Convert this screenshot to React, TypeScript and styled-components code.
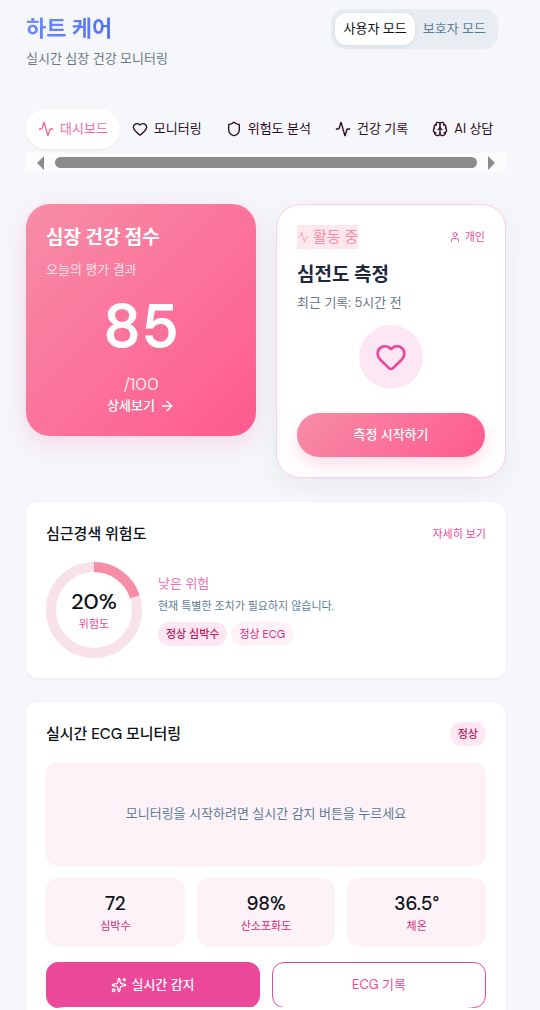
import React from "react";
import styled, { createGlobalStyle, css } from "styled-components";
import { Activity, ArrowRight, Brain, Heart, Shield, Sparkles, User } from "lucide-react";

const brand = "linear-gradient(135deg, #f78da7 0%, #ff5a8f 100%)";
const pink = "#ec4899";

const GlobalStyle = createGlobalStyle`
  *, *::before, *::after { box-sizing: border-box; }
  body {
    margin: 0;
    background: #f5f7fb;
    color: #0c1116;
    font-family: "DM Sans", Lato, "Noto Sans CJK KR", sans-serif;
    font-size: 13px;
    line-height: 20px;
  }
  h1, h2, p, dl, dd { margin: 0; }
  button { font: inherit; border: 0; cursor: pointer; background: none; padding: 0; }
  a { color: inherit; text-decoration: none; }
  svg { flex: none; }
`;

const Page = styled.div`
  height: 100vh;
  overflow-y: auto;
  scrollbar-width: none;
`;

const Content = styled.div`
  padding: 8px 34px 80px 26px;
`;

const Header = styled.header`
  display: flex;
  justify-content: space-between;
  align-items: flex-start;
  padding: 1px 8px 0 0;
`;

const Brand = styled.h1`
  width: fit-content;
  font-size: 22px;
  line-height: 40px;
  font-weight: 700;
  color: transparent;
  background: linear-gradient(135deg, #748ffc, #4c6ef5);
  background-clip: text;
`;

const Tagline = styled.p`
  color: #6b7785;
`;

const ModeSwitch = styled.div`
  display: flex;
  padding: 4px;
  border-radius: 14px;
  background: #e8edf4;
`;

const Mode = styled.button<{ $on?: boolean }>`
  height: 32px;
  padding: 0 8px;
  border-radius: 12px;
  color: #5c7c96;
  ${(p) => p.$on && css`
    background: #fff;
    color: #0c1116;
    box-shadow: 0 1px 4px rgba(0, 0, 0, 0.08);
  `}
`;

const Tabs = styled.nav`
  display: flex;
  margin-top: 40px;
  height: 40px;
  white-space: nowrap;
`;

const Tab = styled.button<{ $on?: boolean }>`
  display: flex;
  align-items: center;
  gap: 6px;
  padding: 0 12px;
  border-radius: 20px;
  color: #2d0a1b;
  ${(p) => p.$on && css`
    background: #fff;
    color: #f368a0;
    box-shadow: 0 1px 3px rgba(0, 0, 0, 0.06);
  `}
`;

const Scrollbar = styled.div`
  display: flex;
  align-items: center;
  justify-content: space-between;
  gap: 11px;
  height: 19px;
  margin: 4px 0 32px;
  padding: 0 11px;
  background: #fcfcfc;
`;

const Thumb = styled.div`
  flex: 1;
  height: 11px;
  border-radius: 6px;
  background: #8b8b8b;
`;

const Pair = styled.section`
  display: grid;
  grid-template-columns: 1fr 1fr;
  align-items: start;
  gap: 20px;
`;

const ScoreCard = styled.article`
  display: flex;
  flex-direction: column;
  padding: 20px;
  border-radius: 24px;
  color: #fff;
  background: ${brand};
  box-shadow: 0 8px 24px rgba(255, 90, 143, 0.2);
`;

const CardTitle = styled.h2`
  font-size: 19px;
  line-height: 28px;
  font-weight: 700;
`;

const ScoreNote = styled.p`
  margin-top: 8px;
  color: rgba(255, 255, 255, 0.8);
`;

const Score = styled.strong`
  align-self: center;
  font-size: 61px;
  line-height: 60px;
  font-weight: 600;
  margin-top: 16px;
`;

const ScoreMax = styled.span`
  align-self: center;
  margin: 16px 0 0;
  font-size: 17px;
  line-height: 24px;
  color: rgba(255, 255, 255, 0.85);
`;

const MoreLink = styled.a`
  display: flex;
  align-items: center;
  align-self: center;
  gap: 4px;
  font-weight: 500;
`;

const MeasureCard = styled.article`
  display: flex;
  flex-direction: column;
  padding: 20px;
  border: 1px solid #f9cfe4;
  border-radius: 24px;
  background: #fff;
  box-shadow: 0 8px 24px rgba(30, 41, 59, 0.06);
`;

const Row = styled.div`
  display: flex;
  align-items: center;
  justify-content: space-between;
`;

const Status = styled.span`
  display: flex;
  align-items: center;
  gap: 4px;
  font-size: 15px;
  line-height: 24px;
  color: #f78da7;
  background: #ffe8ed;
`;

const Person = styled.span`
  display: flex;
  align-items: center;
  gap: 4px;
  font-size: 11px;
  color: ${pink};
`;

const MeasureTitle = styled(CardTitle)`
  margin-top: 12px;
  color: #1e293b;
`;

const Recent = styled.p`
  margin-top: 4px;
  color: #6b7785;
`;

const HeartDisc = styled.div`
  display: grid;
  place-items: center;
  align-self: center;
  width: 64px;
  height: 64px;
  margin: 12px 0 24px;
  border-radius: 50%;
  color: ${pink};
  background: #fce7f3;
`;

const StartButton = styled.button`
  height: 44px;
  border-radius: 22px;
  font-weight: 500;
  color: #fff;
  background: ${brand};
  box-shadow: 0 8px 16px rgba(255, 90, 143, 0.2);
`;

const Panel = styled.section`
  margin-top: 24px;
  padding: 20px;
  border-radius: 12px;
  background: #fff;
  box-shadow: 0 1px 3px rgba(0, 0, 0, 0.06);
`;

const PanelTitle = styled.h2`
  font-size: 15px;
  line-height: 24px;
  font-weight: 500;
`;

const DetailLink = styled.a`
  font-size: 11px;
  color: ${pink};
`;

const RiskBody = styled.div`
  display: flex;
  align-items: center;
  gap: 16px;
  margin-top: 16px;
`;

const Gauge = styled.div`
  display: grid;
  place-items: center;
  width: 96px;
  height: 96px;
  > * { grid-area: 1 / 1; }
`;

const GaugeText = styled.div`
  display: grid;
  justify-items: center;
  padding-top: 4px;
  font-size: 11px;
  color: ${pink};
  strong {
    font-size: 22px;
    line-height: 24px;
    font-weight: 500;
    color: #0c1116;
  }
`;

const RiskLevel = styled.p`
  color: #f472b6;
`;

const RiskText = styled.p`
  font-size: 11px;
  line-height: 24px;
  color: #5c7c96;
`;

const Tags = styled.div`
  display: flex;
  gap: 4px;
  margin-top: 4px;
`;

const Tag = styled.span<{ $soft?: boolean }>`
  padding: 0 8px;
  border-radius: 12px;
  font-size: 11px;
  line-height: 24px;
  font-weight: ${(p) => (p.$soft ? 400 : 500)};
  color: ${(p) => (p.$soft ? "#db2777" : "#be185d")};
  background: ${(p) => (p.$soft ? "#fdf2f8" : "#fce7f3")};
`;

const Monitor = styled.div`
  display: grid;
  place-items: center;
  height: 104px;
  margin-top: 16px;
  border-radius: 12px;
  color: #5c7c96;
  background: #fdf2f8;
`;

const Vitals = styled.dl`
  display: grid;
  grid-template-columns: repeat(3, 1fr);
  gap: 12px;
  margin-top: 12px;
`;

const Vital = styled.div`
  display: flex;
  flex-direction: column-reverse;
  align-items: center;
  padding: 14px 0 10px;
  border-radius: 12px;
  background: #fdf2f8;
  dt { font-size: 11px; color: #db2777; }
  dd { font-size: 19px; line-height: 24px; font-weight: 500; }
`;

const Actions = styled.div`
  display: grid;
  grid-template-columns: 1fr 1fr;
  gap: 12px;
  margin-top: 16px;
`;

const Action = styled.button<{ $filled?: boolean }>`
  display: flex;
  align-items: center;
  justify-content: center;
  gap: 4px;
  height: 46px;
  border: 1px solid ${pink};
  border-radius: 12px;
  font-weight: ${(p) => (p.$filled ? 500 : 400)};
  color: ${(p) => (p.$filled ? "#fff" : pink)};
  background: ${(p) => (p.$filled ? pink : "#fff")};
`;

const BottomDock = styled.div`
  position: fixed;
  left: 34px;
  right: 42px;
  bottom: -61px;
  height: 64px;
  border-radius: 32px;
  background: #fff;
`;

const tabs = [
  { label: "대시보드", Icon: Activity },
  { label: "모니터링", Icon: Heart },
  { label: "위험도 분석", Icon: Shield },
  { label: "건강 기록", Icon: Activity },
  { label: "AI 상담", Icon: Brain },
];

const vitals = [
  ["72", "심박수"],
  ["98%", "산소포화도"],
  ["36.5°", "체온"],
];

export default function App() {
  return (
    <Page>
      <GlobalStyle />
      <Content>
        <Header>
          <div>
            <Brand>하트 케어</Brand>
            <Tagline>실시간 심장 건강 모니터링</Tagline>
          </div>
          <ModeSwitch>
            <Mode $on>사용자 모드</Mode>
            <Mode>보호자 모드</Mode>
          </ModeSwitch>
        </Header>
        <Tabs>
          {tabs.map(({ label, Icon }, i) => (
            <Tab key={label} $on={i === 0}>
              <Icon size={16} />
              {label}
            </Tab>
          ))}
        </Tabs>
        <Scrollbar aria-hidden="true">
          <svg width="7" height="14" fill="#8b8b8b"><path d="M7 0v14L0 7z" /></svg>
          <Thumb />
          <svg width="7" height="14" fill="#8b8b8b"><path d="M0 0v14l7-7z" /></svg>
        </Scrollbar>
        <Pair>
          <ScoreCard>
            <CardTitle>심장 건강 점수</CardTitle>
            <ScoreNote>오늘의 평가 결과</ScoreNote>
            <Score>85</Score>
            <ScoreMax>/100</ScoreMax>
            <MoreLink href="#score">상세보기 <ArrowRight size={16} /></MoreLink>
          </ScoreCard>
          <MeasureCard>
            <Row>
              <Status><Activity size={12} strokeWidth={1.5} />활동 중</Status>
              <Person><User size={12} />개인</Person>
            </Row>
            <MeasureTitle>심전도 측정</MeasureTitle>
            <Recent>최근 기록: 5시간 전</Recent>
            <HeartDisc><Heart size={32} /></HeartDisc>
            <StartButton>측정 시작하기</StartButton>
          </MeasureCard>
        </Pair>
        <Panel>
          <Row>
            <PanelTitle>심근경색 위험도</PanelTitle>
            <DetailLink href="#risk">자세히 보기</DetailLink>
          </Row>
          <RiskBody>
            <Gauge>
              <svg width="96" height="96" fill="none" strokeWidth="10">
                <circle cx="48" cy="48" r="43" stroke="#f8e1e9" />
                <circle cx="48" cy="48" r="43" stroke="#f78da7" pathLength="100" strokeDasharray="20 80" transform="rotate(-90 48 48)" />
              </svg>
              <GaugeText><strong>20%</strong>위험도</GaugeText>
            </Gauge>
            <div>
              <RiskLevel>낮은 위험</RiskLevel>
              <RiskText>현재 특별한 조치가 필요하지 않습니다.</RiskText>
              <Tags>
                <Tag>정상 심박수</Tag>
                <Tag $soft>정상 ECG</Tag>
              </Tags>
            </div>
          </RiskBody>
        </Panel>
        <Panel>
          <Row>
            <PanelTitle>실시간 ECG 모니터링</PanelTitle>
            <Tag>정상</Tag>
          </Row>
          <Monitor>모니터링을 시작하려면 실시간 감지 버튼을 누르세요</Monitor>
          <Vitals>
            {vitals.map(([value, label]) => (
              <Vital key={label}>
                <dt>{label}</dt>
                <dd>{value}</dd>
              </Vital>
            ))}
          </Vitals>
          <Actions>
            <Action $filled><Sparkles size={16} />실시간 감지</Action>
            <Action>ECG 기록</Action>
          </Actions>
        </Panel>
      </Content>
      <BottomDock />
    </Page>
  );
}
